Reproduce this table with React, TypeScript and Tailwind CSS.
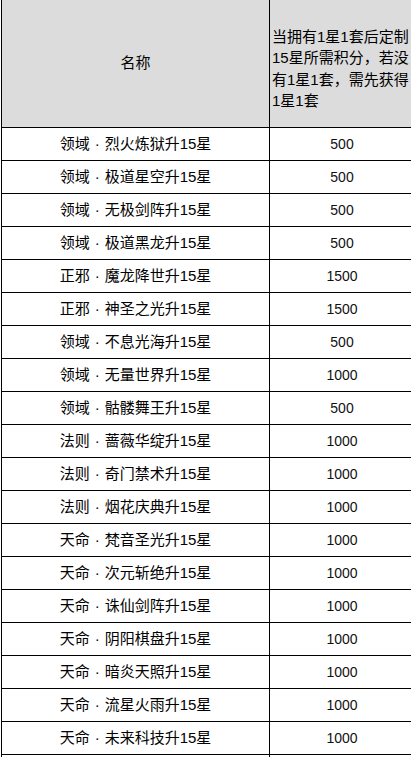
const rows: { name: [string, string]; points: number }[] = [
  { name: ['领域', '烈火炼狱升15星'], points: 500 },
  { name: ['领域', '极道星空升15星'], points: 500 },
  { name: ['领域', '无极剑阵升15星'], points: 500 },
  { name: ['领域', '极道黑龙升15星'], points: 500 },
  { name: ['正邪', '魔龙降世升15星'], points: 1500 },
  { name: ['正邪', '神圣之光升15星'], points: 1500 },
  { name: ['领域', '不息光海升15星'], points: 500 },
  { name: ['领域', '无量世界升15星'], points: 1000 },
  { name: ['领域', '骷髅舞王升15星'], points: 500 },
  { name: ['法则', '蔷薇华绽升15星'], points: 1000 },
  { name: ['法则', '奇门禁术升15星'], points: 1000 },
  { name: ['法则', '烟花庆典升15星'], points: 1000 },
  { name: ['天命', '梵音圣光升15星'], points: 1000 },
  { name: ['天命', '次元斩绝升15星'], points: 1000 },
  { name: ['天命', '诛仙剑阵升15星'], points: 1000 },
  { name: ['天命', '阴阳棋盘升15星'], points: 1000 },
  { name: ['天命', '暗炎天照升15星'], points: 1000 },
  { name: ['天命', '流星火雨升15星'], points: 1000 },
  { name: ['天命', '未来科技升15星'], points: 1000 },
];

const headerLines = ['当拥有1星1套后定制', '15星所需积分，若没', '有1星1套，需先获得', '1星1套'];

export default function App() {
  return (
    <div
      className="w-[411px] h-[757px] overflow-hidden bg-white text-black text-[15px]"
      style={{ fontFamily: '"Liberation Sans", "Noto Sans CJK SC", sans-serif' }}
    >
      <div className="ml-[1px] w-[413px] border-l border-black">
        {/* header */}
        <div className="flex h-[128px] border-b border-black bg-[#dcdcdc]">
          <div className="w-[268px] shrink-0 border-r border-black flex items-center justify-center">
            名称
          </div>
          <div className="flex-1 flex flex-col justify-center pl-[2px] pt-[10px] leading-[21.5px] whitespace-nowrap">
            {headerLines.map((line) => (
              <div key={line}>{line}</div>
            ))}
          </div>
        </div>

        {rows.map(({ name, points }) => (
          <div key={name[1]} className="flex h-[33px] border-b border-black">
            <div className="w-[268px] shrink-0 border-r border-black flex items-center justify-center whitespace-nowrap">
              {name[0]}
              <span className="inline-block w-[1em] text-center">·</span>
              {name[1]}
            </div>
            <div className="flex-1 flex items-center justify-center text-[14px] text-[#111]">{points}</div>
          </div>
        ))}

        {/* next row, only its top edge shows */}
        <div className="flex h-[33px]">
          <div className="w-[268px] shrink-0 border-r border-black" />
          <div className="flex-1" />
        </div>
      </div>
    </div>
  );
}
